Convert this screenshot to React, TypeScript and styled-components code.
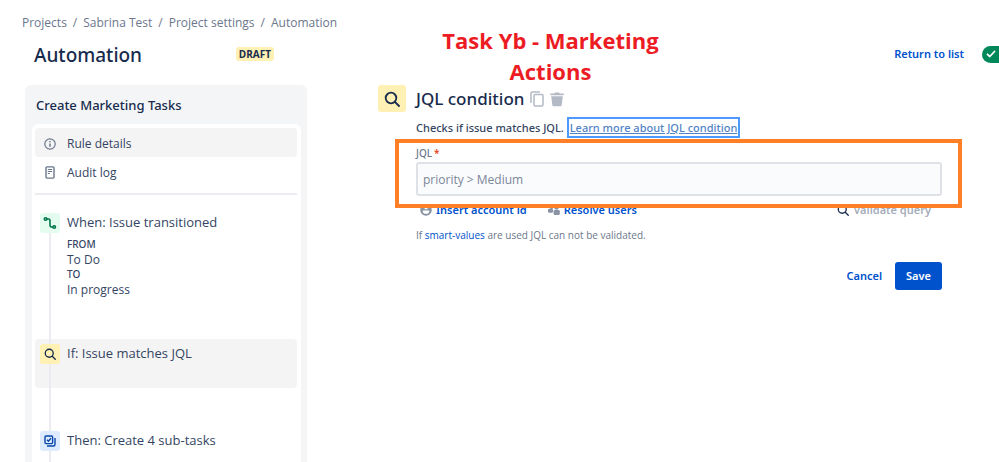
import React from 'react';
import styled, { createGlobalStyle, css } from 'styled-components';

const ink = '#172b4d';
const muted = '#6b778c';
const blue = '#0052cc';
const medium = '"Noto Sans", "Open Sans", sans-serif';

const GlobalStyle = createGlobalStyle`
  *, *::before, *::after { box-sizing: border-box; }
  body {
    margin: 0;
    background: #fff;
    color: ${ink};
    font: 400 12px/16px "Open Sans", "Noto Sans", sans-serif;
  }
  h1, h2, h3, p, ol, ul, dl, dd { margin: 0; padding: 0; }
  ol, ul { list-style: none; }
  button, input { font: inherit; color: inherit; }
  a { color: ${blue}; text-decoration: none; }
`;

const Page = styled.div`
  position: relative;
  display: flex;
  flex-direction: column;
  min-height: 100vh;
  padding-top: 15px;
  overflow: hidden;
`;

const Breadcrumbs = styled.ol`
  display: flex;
  padding-left: 22px;
  color: ${muted};

  li + li::before {
    content: '/';
    padding: 0 6px;
  }
  a { color: inherit; }
`;

const Header = styled.header`
  display: flex;
  align-items: center;
  height: 46px;
  padding-left: 34px;
`;

const HeaderStart = styled.div`
  display: flex;
  align-items: center;
  justify-content: space-between;
  width: 240px;
`;

const PageTitle = styled.h1`
  padding-top: 2px;
  font: 500 19px/28px ${medium};
`;

const Lozenge = styled.span`
  padding: 0 3px;
  border-radius: 3px;
  background: #fff0b3;
  font-size: 10px;
  font-weight: 700;
  line-height: 14px;
`;

const HeaderEnd = styled.div`
  display: flex;
  align-items: center;
  gap: 18px;
  margin: 0 -15px 0 auto;

  a { font: 600 11px/16px ${medium}; }
`;

const Toggle = styled.label`
  position: relative;
  display: flex;
  align-items: center;
  width: 32px;
  height: 17px;
  padding-left: 4px;
  border-radius: 9px;
  background: #00875a;

  input {
    position: absolute;
    inset: 0;
    margin: 0;
    opacity: 0;
  }
`;

const Layout = styled.div`
  display: grid;
  grid-template-columns: 282px minmax(0, 1fr);
  column-gap: 71px;
  flex: 1;
  padding: 8px 57px 0 25px;
`;

const Sidebar = styled.aside`
  display: flex;
  flex-direction: column;
  padding: 0 6px 0 7px;
  border-radius: 6px 6px 0 0;
  background: #f4f5f7;
`;

const SidebarTitle = styled.h2`
  padding: 10px 4px 9px;
  font: 500 13px/20px ${medium};
`;

const SidebarCard = styled.div`
  display: flex;
  flex-direction: column;
  flex: 1;
  padding: 4px 4px 0 3px;
  border-radius: 6px 6px 0 0;
  background: #fff;
`;

const Menu = styled.nav`
  padding-bottom: 7px;
  border-bottom: 2px solid #ebecf0;
`;

const MenuItem = styled.a<{ $active?: boolean }>`
  display: grid;
  grid-template-columns: 20px 1fr;
  align-items: center;
  column-gap: 7px;
  height: 29px;
  padding: 2px 0 0 5px;
  border-radius: 4px;
  color: #344563;
  background: ${({ $active }) => ($active ? '#f4f4f4' : 'transparent')};

  svg { justify-self: center; color: ${muted}; }
`;

const Steps = styled.ol`
  position: relative;
  flex: 1;
  padding-top: 13px;

  &::before {
    content: '';
    position: absolute;
    top: 20px;
    bottom: 0;
    left: 14px;
    width: 2px;
    background: #ebecf0;
  }
`;

const Step = styled.li<{ $active?: boolean }>`
  display: grid;
  grid-template-columns: 20px 1fr;
  align-items: start;
  column-gap: 7px;
  min-height: 49px;
  margin-bottom: 38px;
  padding: 5px 5px 4px;
  border-radius: 4px;
  background: ${({ $active }) => ($active ? 'rgba(9, 9, 9, 0.045)' : 'transparent')};

  &:last-child {
    min-height: 0;
    margin-bottom: 0;
  }
`;

const tones = {
  green: css`background: #e3fcef; color: #00754e;`,
  yellow: css`background: #fff0b3; color: ${ink};`,
  blue: css`background: #deebff; color: #0747a6;`,
};

const Tile = styled.span<{ $tone: keyof typeof tones; $large?: boolean }>`
  position: relative;
  display: grid;
  place-items: center;
  width: ${({ $large }) => ($large ? 28 : 20)}px;
  height: ${({ $large }) => ($large ? 27 : 20)}px;
  border-radius: 3px;
  ${({ $tone }) => tones[$tone]}
`;

const StepTitle = styled.h3`
  color: #344563;
  font-size: 13px;
  font-weight: 400;
  line-height: 18px;
`;

const Transition = styled.dl`
  padding-top: 6px;
  color: #344563;
  line-height: 15px;

  dt { font: 500 10px/15px ${medium}; }
`;

const Main = styled.main`
  display: grid;
  grid-template-columns: 28px minmax(0, 1fr);
  column-gap: 10px;
  align-content: start;
`;

const ConditionHeader = styled.div`
  display: flex;
  align-items: center;
  gap: 6px;
  height: 28px;
`;

const ConditionTitle = styled.h2`
  font: 500 17px/24px ${medium};
`;

const Tools = styled.div`
  display: flex;
  gap: 6px;
`;

const IconButton = styled.button`
  display: grid;
  place-items: center;
  padding: 0;
  border: 0;
  background: none;
  color: #b3bac5;
`;

const Content = styled.div`
  grid-column: 2;
  padding-top: 7px;
`;

const Description = styled.p`
  color: #344563;
  font: 500 11px/16px ${medium};

  a {
    margin-left: 2px;
    padding: 1px;
    color: #5283c5;
    text-decoration: underline;
    outline: 2px solid #4c9aff;
  }
`;

const Field = styled.div`
  position: relative;
  display: flex;
  flex-direction: column;
  padding-top: 9px;

  &::after {
    content: '';
    position: absolute;
    inset: 3px -20px -12px -21px;
    border: 4px solid #ff7f27;
    pointer-events: none;
  }

  label {
    color: ${muted};
    font: 500 10px/16px ${medium};
  }
  label span {
    margin-left: 2px;
    color: #de350b;
  }

  input {
    width: 100%;
    height: 34px;
    margin-top: 1px;
    padding: 0 5px;
    border: 2px solid #dfe1e6;
    border-radius: 3px;
    background: #fafbfc;
    color: #7a8699;
  }
`;

const FieldActions = styled.div`
  display: flex;
  align-items: center;
  gap: 21px;
  padding: 5px 11px 0 4px;
`;

const TextButton = styled.button<{ $end?: boolean }>`
  display: flex;
  align-items: center;
  gap: 4px;
  margin-left: ${({ $end }) => ($end ? 'auto' : '0')};
  padding: 0;
  border: 0;
  background: none;
  color: ${blue};
  font: 600 11px/18px ${medium};

  svg { color: #8993a4; }

  &:disabled { color: #a5adba; }
  &:disabled svg { color: ${ink}; }
`;

const Hint = styled.p`
  padding-top: 8px;
  color: ${muted};
  font-size: 10px;
`;

const FormActions = styled.div`
  display: flex;
  justify-content: flex-end;
  padding-top: 19px;
`;

const Button = styled.button<{ $primary?: boolean }>`
  height: 28px;
  padding: 0 ${({ $primary }) => ($primary ? 11 : 13)}px;
  border: 0;
  border-radius: 3px;
  background: ${({ $primary }) => ($primary ? blue : 'transparent')};
  color: ${({ $primary }) => ($primary ? '#fff' : blue)};
  font: 600 11px/16px ${medium};
`;

const Annotation = styled.p`
  position: absolute;
  top: 25px;
  left: 50%;
  width: 240px;
  margin-left: -69px;
  color: #ed1c24;
  font-size: 22px;
  font-weight: 700;
  line-height: 31px;
  text-align: center;
`;

const SearchIcon = ({ size }: { size: number }) => (
  <svg width={size} height={size} viewBox="0 0 16 16" fill="none" stroke="currentColor" strokeWidth="1.8" strokeLinecap="round">
    <circle cx="7" cy="7" r="5.3" />
    <path d="M11 11l4 4" />
  </svg>
);

const InfoIcon = () => (
  <svg width="12" height="12" viewBox="0 0 12 12" fill="none" stroke="currentColor" strokeWidth="1.2">
    <circle cx="6" cy="6" r="5.2" />
    <path d="M6 5.4v3.4M6 3v1.3" strokeWidth="1.5" />
  </svg>
);

const LogIcon = () => (
  <svg width="10" height="13" viewBox="0 0 10 13" fill="none" stroke="currentColor" strokeWidth="1.4">
    <rect x="1" y=".9" width="8" height="11.2" rx="1" />
    <path d="M2.8 3.5h4.4M2.8 5.5h4.4M2.8 7.5h2" strokeWidth="1" />
  </svg>
);

const TransitionIcon = () => (
  <svg width="14" height="14" viewBox="0 0 14 14" fill="none" stroke="currentColor" strokeWidth="1.6">
    <circle cx="2.6" cy="3" r="1.3" />
    <circle cx="11.2" cy="11" r="1.3" />
    <path d="M4 3h1.5Q7 3 7 4.5V9.5Q7 11 8.5 11H10" />
  </svg>
);

const SubtasksIcon = () => (
  <svg width="12" height="12" viewBox="0 0 12 12" fill="none" stroke="currentColor" strokeWidth="1.4">
    <rect x="1" y="1" width="7.6" height="7.6" rx="1" />
    <path d="M3 4.7l1.4 1.5 2.6-3" />
    <path d="M11 3v6.5q0 1.5-1.5 1.5H3" />
  </svg>
);

const CopyIcon = () => (
  <svg width="14" height="16" viewBox="0 0 14 16" fill="none" stroke="currentColor" strokeWidth="1.5">
    <path d="M1 12V2.3Q1 1 2.3 1H10" />
    <rect x="4" y="3.6" width="9" height="11.4" rx="1.2" />
  </svg>
);

const TrashIcon = () => (
  <svg width="14" height="15" viewBox="0 0 14 15" fill="currentColor">
    <path d="M.3 3.2V1.5h4L5 .5h4l.7 1h4v1.7zM1.2 4.2h11.6l-1.1 8.8q-.2 1.3-1.4 1.3H3.7q-1.2 0-1.4-1.3z" />
  </svg>
);

const PersonIcon = () => (
  <svg width="12" height="12" viewBox="0 0 12 12">
    <circle cx="6" cy="6" r="5.8" fill="currentColor" />
    <circle cx="6" cy="3.7" r="1.7" fill="#fff" />
    <path d="M2.8 6.5h6.4v1Q9 9.8 6 9.8T2.8 7.5z" fill="#fff" />
  </svg>
);

const UsersIcon = () => (
  <svg width="12" height="12" viewBox="0 0 12 12" fill="currentColor">
    <circle cx="8.5" cy="3.5" r="2.3" />
    <rect x="5.6" y="6" width="6.2" height="5" rx="1.3" />
    <rect x="0" y="4.8" width="5" height="4" rx="1.2" />
    <circle cx="3.5" cy="3.6" r="1.6" />
  </svg>
);

const CheckIcon = () => (
  <svg width="10" height="10" viewBox="0 0 10 10" fill="none" stroke="#fff" strokeWidth="1.8" strokeLinecap="round" strokeLinejoin="round">
    <path d="M1.5 5.3l2.3 2.2L8.5 2.5" />
  </svg>
);

export default function App() {
  return (
    <>
      <GlobalStyle />
      <Page>
        <nav aria-label="Breadcrumbs">
          <Breadcrumbs>
            <li><a href="#projects">Projects</a></li>
            <li><a href="#project">Sabrina Test</a></li>
            <li><a href="#settings">Project settings</a></li>
            <li><a href="#automation">Automation</a></li>
          </Breadcrumbs>
        </nav>
        <Header>
          <HeaderStart>
            <PageTitle>Automation</PageTitle>
            <Lozenge>DRAFT</Lozenge>
          </HeaderStart>
          <HeaderEnd>
            <a href="#list">Return to list</a>
            <Toggle>
              <input type="checkbox" role="switch" aria-label="Rule enabled" defaultChecked />
              <CheckIcon />
            </Toggle>
          </HeaderEnd>
        </Header>
        <Layout>
          <Sidebar>
            <SidebarTitle>Create Marketing Tasks</SidebarTitle>
            <SidebarCard>
              <Menu aria-label="Rule">
                <MenuItem href="#details" $active><InfoIcon />Rule details</MenuItem>
                <MenuItem href="#log"><LogIcon />Audit log</MenuItem>
              </Menu>
              <Steps>
                <Step>
                  <Tile $tone="green"><TransitionIcon /></Tile>
                  <div>
                    <StepTitle>When: Issue transitioned</StepTitle>
                    <Transition>
                      <dt>FROM</dt>
                      <dd>To Do</dd>
                      <dt>TO</dt>
                      <dd>In progress</dd>
                    </Transition>
                  </div>
                </Step>
                <Step $active>
                  <Tile $tone="yellow"><SearchIcon size={12} /></Tile>
                  <StepTitle>If: Issue matches JQL</StepTitle>
                </Step>
                <Step>
                  <Tile $tone="blue"><SubtasksIcon /></Tile>
                  <StepTitle>Then: Create 4 sub-tasks</StepTitle>
                </Step>
              </Steps>
            </SidebarCard>
          </Sidebar>
          <Main>
            <Tile $tone="yellow" $large><SearchIcon size={16} /></Tile>
            <ConditionHeader>
              <ConditionTitle>JQL condition</ConditionTitle>
              <Tools>
                <IconButton type="button" aria-label="Duplicate"><CopyIcon /></IconButton>
                <IconButton type="button" aria-label="Delete"><TrashIcon /></IconButton>
              </Tools>
            </ConditionHeader>
            <Content>
              <Description>
                Checks if issue matches JQL. <a href="#learn">Learn more about JQL condition</a>
              </Description>
              <Field>
                <label htmlFor="jql">JQL<span>*</span></label>
                <input id="jql" type="text" required defaultValue="priority > Medium" />
              </Field>
              <FieldActions>
                <TextButton type="button"><PersonIcon />Insert account id</TextButton>
                <TextButton type="button"><UsersIcon />Resolve users</TextButton>
                <TextButton type="button" $end disabled><SearchIcon size={12} />Validate query</TextButton>
              </FieldActions>
              <Hint>
                If <a href="#smart-values">smart-values</a> are used JQL can not be validated.
              </Hint>
              <FormActions>
                <Button type="button">Cancel</Button>
                <Button type="submit" $primary>Save</Button>
              </FormActions>
            </Content>
          </Main>
        </Layout>
        <Annotation>Task Yb - Marketing Actions</Annotation>
      </Page>
    </>
  );
}
